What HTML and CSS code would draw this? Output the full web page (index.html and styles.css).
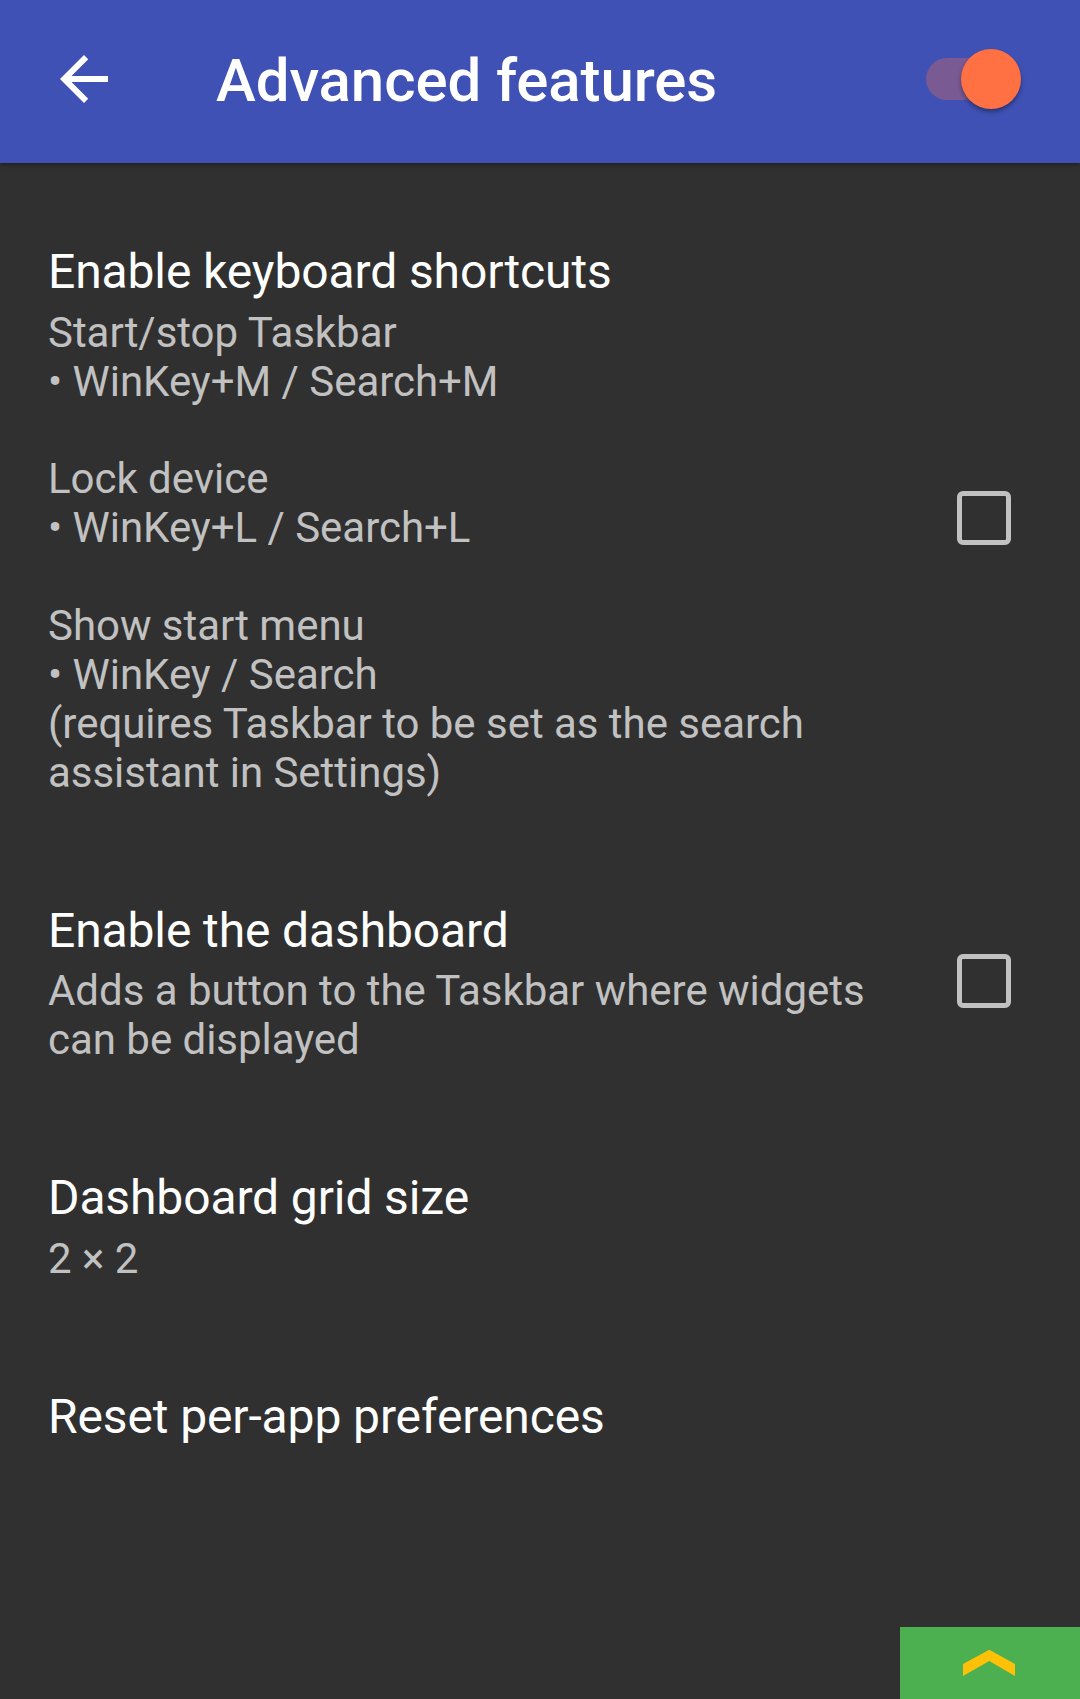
FILE: index.html
```html
<!DOCTYPE html>
<html lang="en">
<head>
<meta charset="utf-8">
<title>Advanced features</title>
<link rel="stylesheet" href="styles.css">
</head>
<body>
<div class="screen">
  <header class="toolbar">
    <svg class="back-icon" viewBox="0 0 24 24" width="72" height="72" aria-hidden="true">
      <path fill="#ffffff" d="M20 11H7.83l5.59-5.59L12 4l-8 8 8 8 1.41-1.41L7.83 13H20v-2z"/>
    </svg>
    <h1 class="toolbar-title">Advanced features</h1>
    <div class="switch">
      <div class="switch-track"></div>
      <div class="switch-thumb"></div>
    </div>
  </header>

  <main class="pref-list">
    <div class="pref">
      <div class="pref-text">
        <div class="pref-title">Enable keyboard shortcuts</div>
        <div class="pref-summary">Start/stop Taskbar<br>• WinKey+M / Search+M<br><br>Lock device<br>• WinKey+L / Search+L<br><br>Show start menu<br>• WinKey / Search<br>(requires Taskbar to be set as the search assistant in Settings)</div>
      </div>
      <div class="pref-widget"><div class="checkbox"></div></div>
    </div>

    <div class="pref">
      <div class="pref-text">
        <div class="pref-title">Enable the dashboard</div>
        <div class="pref-summary">Adds a button to the Taskbar where widgets can be displayed</div>
      </div>
      <div class="pref-widget"><div class="checkbox"></div></div>
    </div>

    <div class="pref">
      <div class="pref-text">
        <div class="pref-title">Dashboard grid size</div>
        <div class="pref-summary">2 × 2</div>
      </div>
    </div>

    <div class="pref">
      <div class="pref-text">
        <div class="pref-title">Reset per-app preferences</div>
      </div>
    </div>
  </main>

  <div class="corner-button">
    <svg viewBox="0 0 180 72" width="180" height="72" aria-hidden="true">
      <polygon fill="#FFC107" points="63,37 89.3,22.7 115,37 115,49 89.3,34 63,49"/>
    </svg>
  </div>
</div>
</body>
</html>
```

FILE: styles.css
```css
html, body {
  margin: 0;
  padding: 0;
  background: #303030;
}

.screen {
  position: relative;
  width: 1080px;
  height: 1699px;
  overflow: hidden;
  background: #303030;
  font-family: Roboto, "Noto Sans", "Liberation Sans", sans-serif;
}

.toolbar {
  position: relative;
  z-index: 1;
  box-sizing: border-box;
  height: 163px;
  padding: 0 59px 6px 48px;
  display: flex;
  align-items: center;
  background: #3F51B5;
  box-shadow: 0 2px 4px rgba(0, 0, 0, 0.35);
}

.back-icon {
  display: block;
  flex: none;
}

.toolbar-title {
  margin: 5px 0 0 96px;
  font-size: 60px;
  line-height: 70px;
  font-weight: 500;
  letter-spacing: -0.1px;
  color: #ffffff;
}

.switch {
  position: relative;
  margin-left: auto;
  width: 95px;
  height: 60px;
  flex: none;
}

.switch-track {
  position: absolute;
  left: 0;
  top: 9.5px;
  width: 84px;
  height: 42px;
  border-radius: 21px;
  background: #795A93;
}

.switch-thumb {
  position: absolute;
  right: 0;
  top: 0;
  width: 60px;
  height: 60px;
  border-radius: 50%;
  background: #FF7043;
  box-shadow: 0 3px 4px rgba(0, 0, 0, 0.35);
}

.pref-list {
  display: flex;
  flex-direction: column;
  padding-top: 28.6px;
}

.pref {
  display: flex;
  align-items: center;
  padding: 52.5px 48px;
}

.pref-text {
  flex: 1;
  min-width: 0;
}

.pref-title {
  font-size: 48px;
  line-height: 56px;
  letter-spacing: -0.12px;
  color: #ffffff;
}

.pref-summary {
  margin-top: 8.6px;
  font-size: 42px;
  line-height: 48.9px;
  letter-spacing: -0.03px;
  color: #C1C1C1;
}

.pref-widget {
  width: 96px;
  flex: none;
  display: flex;
  justify-content: center;
}

.checkbox {
  box-sizing: border-box;
  width: 53.5px;
  height: 53.5px;
  margin-bottom: 6px;
  border: 5.5px solid #C1C1C1;
  border-radius: 6px;
}

.corner-button {
  position: absolute;
  left: 900px;
  top: 1627px;
  width: 180px;
  height: 72px;
  background: #4CAF50;
}

.corner-button svg {
  display: block;
}
```
